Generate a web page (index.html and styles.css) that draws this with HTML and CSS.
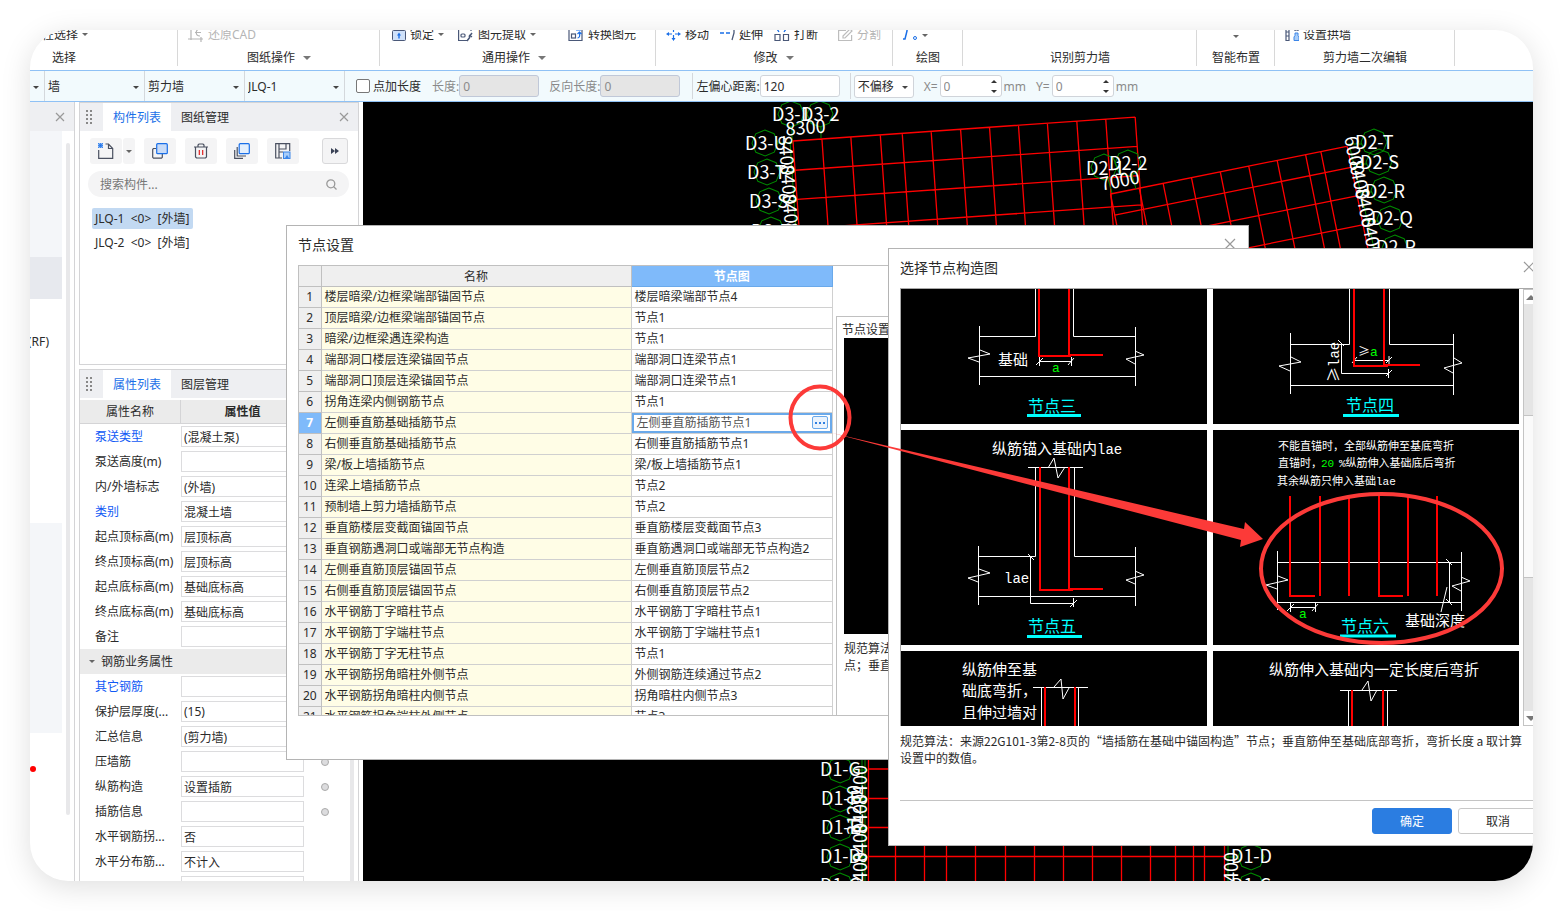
FILE: index.html
```html
<!DOCTYPE html>
<html lang="zh-CN">
<head>
    <meta charset="UTF-8">
    <meta name="viewport" content="width=device-width, initial-scale=1.0">
    <title>节点设置</title>
    <link rel="stylesheet" href="styles.css">
</head>
<body>

<div class="app">
    <header class="ribbon">
        <div class="group group-select">
            <div class="tools"><button class="tool">按属性选择<i class="caret"></i></button></div>
            <div class="group-name">选择</div>
        </div>
        <div class="group group-sheet">
            <div class="tools">
                <button class="tool" disabled>
                    <svg width="16" height="16" viewBox="0 0 16 16"><path d="M3 0v13M0 12h15M13 10v5M12 2c-5 0-5 7 0 7M7 5.500h6" fill="none" stroke="#b5b5b5" stroke-width="1.200"/></svg>还原CAD
                </button>
            </div>
            <div class="group-name">图纸操作<i class="caret big"></i></div>
        </div>
        <div class="group group-common">
            <div class="tools">
                <button class="tool">
                    <svg width="14" height="16" viewBox="0 0 14 16"><rect x=".5" y="3.500" width="13" height="10" rx="1" fill="#cfe1fa" stroke="#4a5878"/><path d="M3 3V0h8v3" fill="none" stroke="#4a5878"/><path d="M7 5.500l2 3H7.700v3H6.300v-3H5z" fill="#1a6fe8"/></svg>锁定<i class="caret"></i>
                </button>
                <button class="tool">
                    <svg width="16" height="16" viewBox="0 0 16 16"><path d="M3 1H.600v12.500H9M13 1v3" fill="none" stroke="#4a5878" stroke-width="1.200"/><rect x="3" y="7" width="4" height="3" rx="1" fill="none" stroke="#4a5878" stroke-width="1.200"/><path d="M9 14l3-4M11 8l3 2M14 6l-3 4" fill="none" stroke="#4a5878" stroke-width="1.500"/></svg>图元提取<i class="caret"></i>
                </button>
                <button class="tool">
                    <svg width="16" height="16" viewBox="0 0 16 16"><path d="M1 2v11.500h13V2" fill="none" stroke="#4a5878" stroke-width="1.200"/><rect x="3.500" y="7" width="4" height="4" fill="none" stroke="#4a5878" stroke-width="1.200"/><path d="M8 3h5M9.500 11c2 0 2.500-2 2-5M9.500 7l2-2 2 2" fill="none" stroke="#1a6fe8" stroke-width="1.200"/></svg>转换图元
                </button>
            </div>
            <div class="group-name">通用操作<i class="caret big"></i></div>
        </div>
        <div class="group group-modify">
            <div class="tools">
                <button class="tool">
                    <svg width="15" height="16" viewBox="0 0 15 16"><path d="M0 7l3-2v4zM15 7l-3-2v4zM7.500 14l-2-3h4zM7.500 0l-2 3h4z" fill="#1a6fe8"/><path d="M3 7h3M9 7h3M7.500 8v4M7.500 3v2" stroke="#1a6fe8" stroke-width="1.200"/></svg>移动
                </button>
                <button class="tool">
                    <svg width="15" height="16" viewBox="0 0 15 16"><path d="M0 6h4M6 6h4" stroke="#1a6fe8" stroke-width="1.400"/><path d="M14 1v5l-2 7" fill="none" stroke="#4a5878" stroke-width="1.300"/></svg>延伸
                </button>
                <button class="tool">
                    <svg width="16" height="16" viewBox="0 0 16 16"><path d="M1 7.500h5v6H1zM9.500 7.500h5v6h-5z" fill="none" stroke="#4a5878" stroke-width="1.200"/><path d="M3 2l2 3M12 2l-2 3" stroke="#1a6fe8" stroke-width="1.300"/></svg>打断
                </button>
                <button class="tool" disabled>
                    <svg width="15" height="16" viewBox="0 0 15 16"><path d="M8 3.500H.600v10h13V8M5 9l7-7 2 2-7 7H5z" fill="none" stroke="#bdbdbd" stroke-width="1.200"/></svg>分割
                </button>
            </div>
            <div class="group-name">修改<i class="caret big"></i></div>
        </div>
        <div class="group group-draw">
            <div class="tools">
                <button class="tool" aria-label="点线绘图">
                    <svg width="15" height="16" viewBox="0 0 15 16"><path d="M0 12h2L4 4V1" fill="none" stroke="#1a6fe8" stroke-width="1.500"/><circle cx="12" cy="11" r="1.500" fill="none" stroke="#1a6fe8"/></svg><i class="caret"></i>
                </button>
            </div>
            <div class="group-name">绘图</div>
        </div>
        <div class="group group-identify">
            <div class="group-name">识别剪力墙</div>
        </div>
        <div class="group group-smart">
            <div class="tools"><button class="tool" aria-label="智能布置"><i class="caret"></i></button></div>
            <div class="group-name">智能布置</div>
        </div>
        <div class="group group-edit">
            <div class="tools">
                <button class="tool">
                    <svg width="14" height="16" viewBox="0 0 14 16"><path d="M1 0v13.500h3V0M1 5h3M1 9h3M10 0v4M13 0v4M10 3h3" fill="none" stroke="#4a5878" stroke-width="1.200"/><path d="M10 6h3v2.500l1 1.500v3.500H9V10l1-1.500z" fill="#a9cdf8" stroke="#3c86e8"/></svg>设置拱墙
                </button>
            </div>
            <div class="group-name">剪力墙二次编辑</div>
        </div>
    </header>

    <div class="options">
        <div class="combo combo-stub"><select aria-label="楼层"><option></option></select></div>
        <div class="combo"><select aria-label="构件大类"><option>墙</option></select></div>
        <div class="combo"><select aria-label="构件类型"><option>剪力墙</option></select></div>
        <div class="combo"><select aria-label="构件名称"><option>JLQ-1</option></select></div>
        <label class="check"><input type="checkbox">点加长度</label>
        <label class="field off">长度:<input type="text" value="0" disabled></label>
        <label class="field off">反向长度:<input type="text" value="0" disabled></label>
        <label class="field ruled">左偏心距离:<input type="text" value="120"></label>
        <div class="offset"><div class="combo boxed"><select aria-label="偏移方式"><option>不偏移</option></select></div></div>
        <label class="field spin">X=<span class="spinner"><input type="text" value="0"></span>mm</label>
        <label class="field spin">Y=<span class="spinner"><input type="text" value="0"></span>mm</label>
    </div>

    <main class="work">
        <aside class="nav">
            <div class="nav-head"><button class="close" aria-label="关闭导航"><svg width="8" height="8" viewBox="0 0 8 8"><path d="M0 0l8 8M8 0L0 8"/></svg></button></div>
            <div class="nav-body">
                <div class="nav-list">
                    <div class="nav-block soft"></div>
                    <div class="nav-block picked"></div>
                    <div class="nav-block items">(RF)</div>
                    <div class="nav-block soft low"></div>
                    <span class="dot"></span>
                </div>
                <div class="nav-scroll"></div>
            </div>
        </aside>

        <div class="panels">
            <section class="panel">
                <div class="tabs">
                    <i class="grip"></i>
                    <button class="tab on">构件列表</button>
                    <button class="tab">图纸管理</button>
                    <button class="close" aria-label="关闭"><svg width="8" height="8" viewBox="0 0 8 8"><path d="M0 0l8 8M8 0L0 8"/></svg></button>
                </div>
                <div class="toolbar">
                    <div class="split">
                        <button class="icon" aria-label="新建"><svg width="16" height="16" viewBox="0 0 16 16"><path d="M.700 7v8.300h14V5.500L10.500 1H7.500M10.500 1v4.500h4.200" fill="none" stroke="#4a5060" stroke-width="1.200"/><path d="M0 0h5v5H0z" fill="#8dbaf5"/><path d="M0 0l5 5M5 0L0 5M2.500 0v5M0 2.500h5" stroke="#1a6fe8" stroke-width=".7"/></svg></button>
                        <button class="icon drop" aria-label="新建选项"><i class="caret"></i></button>
                    </div>
                    <button class="icon" aria-label="复制"><svg width="16" height="16" viewBox="0 0 16 16"><path d="M4 5.500H1.500l-.800.800v8l.800.800h8l.800-.800V11" fill="none" stroke="#4a5060" stroke-width="1.200"/><rect x="4.700" y=".700" width="10.600" height="10" rx="1" fill="#c8dbf7" stroke="#1a6fe8" stroke-width="1.200"/></svg></button>
                    <button class="icon" aria-label="删除"><svg width="16" height="16" viewBox="0 0 16 16"><path d="M1 4h14M2.500 4v10l1 1h9l1-1V4M5 4V2l1-1h4l1 1v2" fill="none" stroke="#4a5060" stroke-width="1.200"/><path d="M6.300 7v5M9.700 7v5" stroke="#e02020" stroke-width="1.200"/></svg></button>
                    <button class="icon" aria-label="层间复制"><svg width="16" height="16" viewBox="0 0 16 16"><path d="M3.200 4v9H12M.700 7v8.300H9" fill="none" stroke="#4a5060" stroke-width="1.200"/><rect x="5.200" y=".700" width="10.100" height="10" rx="1" fill="#e3effd" stroke="#1a6fe8" stroke-width="1.200"/></svg></button>
                    <button class="icon" aria-label="存档"><svg width="16" height="16" viewBox="0 0 16 16"><path d="M7 15H.700V.700h14V8M4 1v14M4 6h7V1M4 9h4" fill="none" stroke="#4a5060" stroke-width="1.200"/><rect x="8.500" y="9" width="6.500" height="6.500" fill="#a9cdf8" stroke="#3c86e8"/><path d="M10 15l2-3 2 3z" fill="#3c86e8"/></svg></button>
                    <button class="icon more" aria-label="更多"><svg width="8" height="6" viewBox="0 0 8 6"><path d="M0 0l4 3-4 3zM4 0l4 3-4 3z" fill="#3a4256"/></svg></button>
                </div>
                <div class="search">
                    <input type="text" placeholder="搜索构件..." aria-label="搜索构件">
                    <svg width="11" height="11" viewBox="0 0 11 11"><circle cx="4.800" cy="4.800" r="4" fill="none" stroke="#9a9a9a" stroke-width="1.300"/><path d="M7.500 7.500l3 3" stroke="#9a9a9a" stroke-width="1.300"/></svg>
                </div>
                <ul class="members">
                    <li><a href="#" class="on">JLQ-1  &lt;0&gt;  [外墙]</a></li>
                    <li><a href="#">JLQ-2  &lt;0&gt;  [外墙]</a></li>
                </ul>
            </section>

            <section class="panel props">
                <div class="tabs">
                    <i class="grip"></i>
                    <button class="tab on">属性列表</button>
                    <button class="tab">图层管理</button>
                </div>
                <div class="prop-head"><span>属性名称</span><b>属性值</b></div>
                <div class="prop-body">
                    <div class="prop-list">
                        <label class="prop key"><span>泵送类型</span><input type="text" value="(混凝土泵)"></label>
                        <label class="prop"><span>泵送高度(m)</span><input type="text"></label>
                        <label class="prop"><span>内/外墙标志</span><input type="text" value="(外墙)"></label>
                        <label class="prop key"><span>类别</span><input type="text" value="混凝土墙"></label>
                        <label class="prop"><span>起点顶标高(m)</span><input type="text" value="层顶标高"></label>
                        <label class="prop"><span>终点顶标高(m)</span><input type="text" value="层顶标高"></label>
                        <label class="prop"><span>起点底标高(m)</span><input type="text" value="基础底标高"></label>
                        <label class="prop"><span>终点底标高(m)</span><input type="text" value="基础底标高"></label>
                        <label class="prop"><span>备注</span><input type="text"></label>
                        <div class="prop-group"><i class="caret"></i>钢筋业务属性</div>
                        <label class="prop key"><span>其它钢筋</span><input type="text"></label>
                        <label class="prop"><span>保护层厚度(...</span><input type="text" value="(15)"></label>
                        <label class="prop"><span>汇总信息</span><input type="text" value="(剪力墙)"></label>
                        <label class="prop"><span>压墙筋</span><input type="text"><i class="mark"></i></label>
                        <label class="prop"><span>纵筋构造</span><input type="text" value="设置插筋"><i class="mark"></i></label>
                        <label class="prop"><span>插筋信息</span><input type="text"><i class="mark"></i></label>
                        <label class="prop"><span>水平钢筋拐...</span><input type="text" value="否"></label>
                        <label class="prop"><span>水平分布筋...</span><input type="text" value="不计入"></label>
                        <label class="prop"><span></span><input type="text" aria-label="属性值"></label>
                    </div>
                    <div class="prop-scroll"></div>
                </div>
            </section>
        </div>

        <div class="canvas">
            <svg class="plan" viewBox="363 102 1170 779" preserveAspectRatio="xMinYMin slice">
                <defs>
                    <polygon id="bubble" points="-5,-12 5,-12 12,-5 12,5 5,12 -5,12 -12,5 -12,-5" transform="rotate(22)"/>
                </defs>
                <g class="red">
                    <path transform="translate(793 141) rotate(-4)" d="M0 0V120M29 0V120M58 0V120M87.500 0V120M109.500 0V120M138.500 0V120M168 0V120M197 0V120M226 0V120M255 0V120M284.500 0V120M313.500 0V120M343 0V120M0 0H343M0 29.300H343M0 58.600H343M0 88H343M0 117H343"/>
                    <path transform="translate(1110.500 194) rotate(-11.400)" d="M0 0V110M29.300 0V110M53.700 0V110M82.600 0V110M112 0V110M141 0V110M170 0V110M199 0V110M214.600 0V110M241.500 0V110M0 0H241M0 21.500H241M0 50.500H241M0 80H241M0 109H241"/>
                    <path d="M868.500 740V881M895.500 740V881M924.500 740V881M946.500 740V881M975.500 740V881M1005.500 740V881M1034.500 740V881M1063.500 740V881M1092.500 740V881M1121.500 740V881M1150.500 740V881M1175.500 740V881M1193.500 740V881M1204.500 740V881M1224.500 740V881M868 769H1224M868 798.500H1224M868 827.500H1224M868 856.500H1224"/>
                </g>
                <g class="green">
                    <use href="#bubble" transform="translate(791 114)"/>
                    <use href="#bubble" transform="translate(820 114)"/>
                    <use href="#bubble" transform="translate(765 143)"/>
                    <use href="#bubble" transform="translate(767 172)"/>
                    <use href="#bubble" transform="translate(769 201)"/>
                    <use href="#bubble" transform="translate(771 230)"/>
                    <use href="#bubble" transform="translate(1104 167)"/>
                    <use href="#bubble" transform="translate(1128 163)"/>
                    <use href="#bubble" transform="translate(1374 142)"/>
                    <use href="#bubble" transform="translate(1379 162)"/>
                    <use href="#bubble" transform="translate(1384 190)"/>
                    <use href="#bubble" transform="translate(1390 219)"/>
                    <use href="#bubble" transform="translate(1395 248)"/>
                    <use href="#bubble" transform="translate(840 770)"/>
                    <use href="#bubble" transform="translate(840 799)"/>
                    <use href="#bubble" transform="translate(840 828)"/>
                    <use href="#bubble" transform="translate(840 857)"/>
                    <use href="#bubble" transform="translate(840 886)"/>
                    <use href="#bubble" transform="translate(1251 857)"/>
                    <use href="#bubble" transform="translate(1251 886)"/>
                    <path d="M792 126v15M821 126v12M777 143h16M779 172h16M781 201h16M790 141l6 90M1108 179l4 14M1132 175l4 14M1350 148l24 100M1362 144h-14M1367 164h-14M1372 192h-12M1378 221h-12M852 770h16M852 799h16M852 828h16M852 857h16M862 740v141M865 740v141M1224 857h15M1228 845v36"/>
                </g>
                <g class="mark-text">
                    <text x="772" y="121">D3-1</text>
                    <text x="801" y="121">D3-2</text>
                    <text x="745" y="150">D3-U</text>
                    <text x="747" y="179">D3-T</text>
                    <text x="749" y="208">D3-S</text>
                    <text x="751" y="238">D3-R</text>
                    <text x="1086" y="175">D2-1</text>
                    <text x="1109" y="170">D2-2</text>
                    <text x="1355" y="149">D2-T</text>
                    <text x="1360" y="169">D2-S</text>
                    <text x="1365" y="198">D2-R</text>
                    <text x="1371" y="225">D2-Q</text>
                    <text x="1376" y="254">D2-P</text>
                    <text x="820" y="776">D1-G</text>
                    <text x="821" y="805">D1-F</text>
                    <text x="821" y="834">D1-E</text>
                    <text x="820" y="863">D1-D</text>
                    <text x="820" y="892">D1-C</text>
                    <text x="1231" y="863">D1-D</text>
                    <text x="1231" y="892">D1-C</text>
                </g>
                <g class="mark-text middle">
                    <text transform="translate(806 134) rotate(-4)">8300</text>
                    <text transform="translate(780 156) rotate(86)">8400</text>
                    <text transform="translate(782 185) rotate(86)">8400</text>
                    <text transform="translate(784 214) rotate(86)">8400</text>
                    <text transform="translate(786 243) rotate(86)">8400</text>
                    <text transform="translate(1121 187) rotate(-11)">7000</text>
                    <text transform="translate(1348 157) rotate(79)">6000</text>
                    <text transform="translate(1353 181) rotate(79)">8400</text>
                    <text transform="translate(1359 209) rotate(79)">8400</text>
                    <text transform="translate(1365 238) rotate(79)">8400</text>
                    <text transform="translate(867 785) rotate(-90)">8400</text>
                    <text transform="translate(867 814) rotate(-90)">8400</text>
                    <text transform="translate(867 843) rotate(-90)">8400</text>
                    <text transform="translate(867 872) rotate(-90)">8400</text>
                    <text transform="translate(861 810) rotate(-90)">31200</text>
                    <text transform="translate(1238 872) rotate(-90)">8400</text>
                </g>
            </svg>
        </div>
    </main>

    <div class="dialog dialog-nodes" role="dialog" aria-label="节点设置">
        <div class="dialog-head">
            <h2>节点设置</h2>
            <button class="close" aria-label="关闭"><svg width="10" height="10" viewBox="0 0 10 10"><path d="M0 0l10 10M10 0L0 10"/></svg></button>
        </div>
        <div class="nodes">
            <div class="table-wrap">
                <table>
                    <thead>
                        <tr><th class="num"></th><th class="name">名称</th><th class="pic">节点图</th></tr>
                    </thead>
                    <tbody>
                        <tr><th>1</th><td>楼层暗梁/边框梁端部锚固节点</td><td>楼层暗梁端部节点4</td></tr>
                        <tr><th>2</th><td>顶层暗梁/边框梁端部锚固节点</td><td>节点1</td></tr>
                        <tr><th>3</th><td>暗梁/边框梁遇连梁构造</td><td>节点1</td></tr>
                        <tr><th>4</th><td>端部洞口楼层连梁锚固节点</td><td>端部洞口连梁节点1</td></tr>
                        <tr><th>5</th><td>端部洞口顶层连梁锚固节点</td><td>端部洞口连梁节点1</td></tr>
                        <tr><th>6</th><td>拐角连梁内侧钢筋节点</td><td>节点1</td></tr>
                        <tr class="current"><th>7</th><td>左侧垂直筋基础插筋节点</td><td><div class="edit">左侧垂直筋插筋节点1<button aria-label="选择节点图"><i></i><i></i><i></i></button></div></td></tr>
                        <tr><th>8</th><td>右侧垂直筋基础插筋节点</td><td>右侧垂直筋插筋节点1</td></tr>
                        <tr><th>9</th><td>梁/板上墙插筋节点</td><td>梁/板上墙插筋节点1</td></tr>
                        <tr><th>10</th><td>连梁上墙插筋节点</td><td>节点2</td></tr>
                        <tr><th>11</th><td>预制墙上剪力墙插筋节点</td><td>节点2</td></tr>
                        <tr><th>12</th><td>垂直筋楼层变截面锚固节点</td><td>垂直筋楼层变截面节点3</td></tr>
                        <tr><th>13</th><td>垂直钢筋遇洞口或端部无节点构造</td><td>垂直筋遇洞口或端部无节点构造2</td></tr>
                        <tr><th>14</th><td>左侧垂直筋顶层锚固节点</td><td>左侧垂直筋顶层节点2</td></tr>
                        <tr><th>15</th><td>右侧垂直筋顶层锚固节点</td><td>右侧垂直筋顶层节点2</td></tr>
                        <tr><th>16</th><td>水平钢筋丁字暗柱节点</td><td>水平钢筋丁字暗柱节点1</td></tr>
                        <tr><th>17</th><td>水平钢筋丁字端柱节点</td><td>水平钢筋丁字端柱节点1</td></tr>
                        <tr><th>18</th><td>水平钢筋丁字无柱节点</td><td>节点1</td></tr>
                        <tr><th>19</th><td>水平钢筋拐角暗柱外侧节点</td><td>外侧钢筋连续通过节点2</td></tr>
                        <tr><th>20</th><td>水平钢筋拐角暗柱内侧节点</td><td>拐角暗柱内侧节点3</td></tr>
                        <tr><th>21</th><td>水平钢筋拐角端柱外侧节点</td><td>节点3</td></tr>
                    </tbody>
                </table>
            </div>
            <div class="preview">
                <h3>节点设置</h3>
                <div class="preview-pic"></div>
                <p>规范算法：来源22G101-3第2-8页的“墙插筋在基础中锚固构造”节<br>点；垂直筋伸至基础底部弯折</p>
            </div>
        </div>
    </div>

    <div class="dialog dialog-pick" role="dialog" aria-label="选择节点构造图">
        <div class="dialog-head">
            <h2>选择节点构造图</h2>
            <button class="close" aria-label="关闭"><svg width="10" height="10" viewBox="0 0 10 10"><path d="M0 0l10 10M10 0L0 10"/></svg></button>
        </div>
        <div class="gallery">
            <div class="tiles">
                <svg class="tile" viewBox="901 209 306 215">
                    <path class="w" d="M1035.500 209V336.500H979M1073.500 209V336.500H1135M979 376.500H1135M979.500 326V385M1135.500 327V386M980 350l10 4-22 4 11 4M1135 351l9 4-18 4 9 5M1039 361.500h32M1039.500 357v9M1071.500 357v9M1036 365l7-7M1068 365l6-7"/>
                    <path class="r" d="M1039 209V356H1071M1069 209V355H1103"/>
                    <text x="998" y="365">基础</text>
                    <text class="g" x="1052" y="372">a</text>
                    <text class="c" x="1028" y="412">节点三</text>
                    <path class="u" d="M1027 415.500h54"/>
                </svg>
                <svg class="tile" viewBox="1213 209 306 215">
                    <path class="w" d="M1349.500 209V344.500H1290M1389.500 209V344.500H1453M1290 385.500H1453M1290.500 333V394M1453.500 334V395M1291 357l10 5-22 4 11 5M1454 358l8 5-18 5 9 5M1354 360.500h35M1389 356v9M1352 363l5-6M1386 363l6-6M1341.500 344V373.500H1389M1388.500 369v9M1386 376l6-6M1338 340l6 6"/>
                    <path class="r" d="M1354 209V366H1388M1384 209V365H1420"/>
                    <text class="t12" x="1358" y="356">≥<tspan class="g">a</tspan></text>
                    <text transform="translate(1339 382) rotate(-90)">≥<tspan class="m">lae</tspan></text>
                    <text class="c" x="1346" y="411">节点四</text>
                    <path class="u" d="M1343 415.500h56"/>
                </svg>
                <svg class="tile" viewBox="901 430 306 215">
                    <path class="w" d="M1028 467.500H1083M1035.500 467V556.500H979M1074.500 467V556.500H1135M979 596.500H1135M978.500 546V605M1135.500 547V606M979 569l11 4-22 5 10 4M1135 571l9 4-18 5 9 4M1030.500 556V603.500H1073M1073.500 598v9M1070 607l7-7M1028 554l6 6M1048 468l6-10 4 20 7-11"/>
                    <path class="r" d="M1040 467V590H1073M1069 467V589H1103"/>
                    <text x="992" y="454">纵筋锚入基础内<tspan class="m">lae</tspan></text>
                    <text class="m" x="1004" y="583">lae</text>
                    <text class="c" x="1028" y="632">节点五</text>
                    <path class="u" d="M1027 636.500h55"/>
                </svg>
                <svg class="tile" viewBox="1213 430 306 215">
                    <path class="w" d="M1277.500 551V610M1461.500 552V611M1277 562.500H1461M1277 602.500H1461M1449.500 562V602M1446 559l6 6M1446 599l6 6M1447 587l-6 25M1278 576l10 4-22 5 11 4M1461 577l9 4-18 5 9 5M1290 607.500h26M1290.500 603v9M1315.500 603v9M1287 611l7-7M1312 611l6-7"/>
                    <path class="r" d="M1290 496V596H1315M1320 496V596M1349 496V596M1379 496V596H1403M1408 496V596M1437 496V596"/>
                    <text class="t11" x="1278" y="450">不能直锚时，全部纵筋伸至基底弯折</text>
                    <text class="t11" x="1278" y="467">直锚时，<tspan class="g" x="1321">20</tspan><tspan class="ms" x="1339">%</tspan>纵筋伸入基础底后弯折</text>
                    <text class="t11" x="1277" y="485">其余纵筋只伸入基础<tspan class="ms">lae</tspan></text>
                    <text class="g" x="1299" y="618">a</text>
                    <text class="c" x="1341" y="632">节点六</text>
                    <text x="1405" y="626">基础深度</text>
                    <path class="u" d="M1340 636h56"/>
                </svg>
                <svg class="tile" viewBox="901 651 306 215">
                    <path class="w" d="M1033 687.500H1088M1041.500 687V866M1078.500 687V866M1054 687l7-8 2 20 6-11"/>
                    <path class="r" d="M1045 687V866M1075 687V866"/>
                    <text x="962" y="675">纵筋伸至基</text>
                    <text x="962" y="696">础底弯折，</text>
                    <text x="962" y="718">且伸过墙对</text>
                </svg>
                <svg class="tile" viewBox="1213 651 306 215">
                    <path class="w" d="M1340 690.500H1397M1348.500 690V866M1387.500 690V866M1362 690l6-9 3 20 6-11"/>
                    <path class="r" d="M1352 690V866M1383 690V866"/>
                    <text x="1269" y="675">纵筋伸入基础内一定长度后弯折</text>
                </svg>
            </div>
            <div class="scrollbar">
                <button aria-label="向上"><i class="caret up"></i></button>
                <div class="thumb"></div>
                <button aria-label="向下"><i class="caret"></i></button>
            </div>
        </div>
        <p class="rule">规范算法：来源22G101-3第2-8页的“墙插筋在基础中锚固构造”节点；垂直筋伸至基础底部弯折，弯折长度 a 取计算设置中的数值。</p>
        <div class="actions">
            <button class="btn primary">确定</button>
            <button class="btn">取消</button>
        </div>
    </div>

    <svg class="notes" viewBox="30 30 1503 851" preserveAspectRatio="xMinYMin slice">
        <ellipse cx="820" cy="417.500" rx="29.500" ry="31"/>
        <ellipse cx="1381.500" cy="568.500" rx="120.500" ry="74.500"/>
        <path d="M832 433L1244 529l1-7 18 17-23 8 1-7z"/>
    </svg>
</div>

</body>
</html>
```
FILE: styles.css
```css
* {
    box-sizing: border-box;
}
body {
    margin: 0;
    height: 100vh;
    padding: 30px;
    background-color: #fff;
    color: #2b2b2b;
    font-family: "Noto Sans", "Noto Sans CJK SC", sans-serif;
    font-size: 12px;
    line-height: 17px;
}
button, input, select {
    font: inherit;
    color: inherit;
}
button {
    background: none;
    border: none;
    padding: 0;
}
h2, h3, p, ul {
    margin: 0;
    padding: 0;
    font-weight: normal;
}
.app {
    position: relative;
    display: flex;
    flex-direction: column;
    height: 100%;
    overflow: hidden;
    border-radius: 38px;
    background-color: #fff;
    box-shadow: 0 6px 30px rgba(0, 0, 0, 0.13);
}
.caret {
    display: inline-block;
    flex: none;
    border: 3px solid transparent;
    border-top-color: #666;
    border-bottom: none;
}
.caret.big {
    border-width: 4px;
    border-bottom: none;
    border-top-color: #777;
}
.close {
    display: flex;
}
.close svg {
    overflow: visible;
    stroke: #999;
    stroke-width: 1.2;
}

/* ribbon */
.ribbon {
    display: flex;
    flex: none;
    height: 40px;
    overflow: hidden;
}
.group {
    position: relative;
    display: flex;
    flex-direction: column;
    flex: none;
    justify-content: flex-end;
    gap: 6px;
    padding: 0 10px 4px;
}
.group::after {
    content: "";
    position: absolute;
    top: 0;
    right: 0;
    height: 36px;
    border-right: 1px solid #d8d8d8;
}
.tools {
    display: flex;
    height: 20px;
}
.tool {
    display: flex;
    align-items: center;
    gap: 4px;
    white-space: nowrap;
}
.tool:disabled {
    color: #b5b5b5;
}
.group-name {
    display: flex;
    align-items: center;
    justify-content: center;
    gap: 8px;
}
.group-select {
    width: 148px;
    padding-right: 90px;
}
.group-select .tools {
    justify-content: flex-end;
}
.group-sheet { width: 202px; }
.group-common {
    width: 276px;
    padding-left: 12px;
    padding-right: 20px;
}
.group-modify {
    width: 237px;
    padding-right: 12px;
}
.group-common .tools {
    gap: 14px;
}
.group-modify .tools {
    gap: 11px;
}
.group-common .tool:last-child, .group-modify .tool:last-child {
    margin-left: auto;
}
.group-draw { width: 70px; }
.group-identify { width: 234px; }
.group-smart { width: 78px; }
.group-smart .tools { justify-content: center; }
.group-edit { width: 180px; }

/* option bar */
.options {
    display: flex;
    flex: none;
    align-items: center;
    height: 32px;
    border-top: 1px solid #8fc1f5;
    border-bottom: 1px solid #8fc1f5;
    background-color: #f2fafd;
}
.combo {
    position: relative;
    width: 100px;
    height: 100%;
    border-right: 1px solid #d4d8dc;
}
.combo::after {
    content: "";
    position: absolute;
    right: 5px;
    top: 50%;
    border: 3px solid transparent;
    border-top-color: #444;
    border-bottom: none;
}
.combo select {
    width: 100%;
    height: 100%;
    padding: 0 3px;
    border: none;
    background: none;
    appearance: none;
}
.combo-stub {
    width: 15px;
}
.combo.boxed {
    width: 60px;
    height: 23px;
    border: 1px solid #d0d4da;
    border-radius: 3px;
    background-color: #fff;
}
.check {
    display: flex;
    align-items: center;
    gap: 3px;
    padding: 0 11px;
}
.check input {
    width: 14px;
    height: 14px;
    margin: 0;
    border: 1px solid #777;
    border-radius: 2px;
    background-color: #fff;
    appearance: none;
}
.field {
    display: flex;
    align-items: center;
    margin-right: 10px;
    white-space: nowrap;
}
.field input {
    width: 80px;
    height: 22px;
    padding: 0 3px;
    border: 1px solid #d0d4da;
    border-radius: 3px;
    background-color: #fff;
}
.field.off, .field.spin, .field.spin input {
    color: #8a8a8a;
}
.field.off input {
    border-color: #c0c8d8;
    background-color: #e5e5e5;
}
.ruled {
    height: 26px;
    margin-left: 2px;
    padding-left: 3px;
    border-left: 1px solid #d4d8dc;
}
.offset {
    display: flex;
    align-items: center;
    height: 26px;
    margin-right: 10px;
    padding-left: 3px;
    border-left: 1px solid #d4d8dc;
}
.spinner {
    position: relative;
    margin: 0 2px;
}
.spinner input {
    width: 62px;
}
.spinner::before, .spinner::after {
    content: "";
    position: absolute;
    right: 5px;
    border: 3px solid transparent;
}
.spinner::before {
    top: 5px;
    border-top: none;
    border-bottom-color: #333;
}
.spinner::after {
    bottom: 4px;
    border-bottom: none;
    border-top-color: #333;
}

/* work area */
.work {
    display: flex;
    flex: 1;
    min-height: 0;
}
.nav {
    display: flex;
    flex-direction: column;
    width: 45px;
    border-right: 1px solid #d4d4d6;
}
.nav-head {
    display: flex;
    align-items: center;
    justify-content: flex-end;
    height: 29px;
    padding-right: 10px;
    background-color: #eeeff2;
}
.nav-body {
    display: flex;
    flex: 1;
    gap: 4px;
}
.nav-list {
    width: 32px;
}
.nav-block {
    display: flex;
    justify-content: flex-end;
    height: 126px;
}
.nav-block.soft { background-color: #f4f6f9; }
.nav-block.low { height: 210px; }
.nav-block.picked {
    height: 42px;
    background-color: #e7e9ee;
}
.nav-block.items {
    height: 224px;
    padding: 34px 13px 0 0;
}
.dot {
    display: block;
    width: 6px;
    height: 6px;
    margin-top: 33px;
    border-radius: 3px;
    background-color: #f00;
}
.nav-scroll {
    width: 4px;
    height: 672px;
    margin-top: 12px;
    border-radius: 2px;
    background-color: #e8e8ea;
}
.panels {
    display: flex;
    flex-direction: column;
    gap: 4px;
    width: 288px;
    padding: 0 4px;
}
.panel {
    flex: none;
    height: 263px;
    border: 1px solid #d4d4d6;
}
.panel.props {
    display: flex;
    flex-direction: column;
    flex: 1;
    min-height: 0;
    border-bottom: none;
}
.tabs {
    display: flex;
    flex: none;
    height: 28px;
    background-color: #eeeff2;
}
.tabs .close {
    align-items: center;
    margin-left: auto;
    padding-right: 10px;
}
.tab {
    padding: 0 10px;
}
.tab.on {
    background-color: #fff;
    color: #1a6fe8;
}
.grip {
    width: 23px;
    padding: 7px 0 6px;
    background-image: linear-gradient(#888 2px, transparent 2px), linear-gradient(#888 2px, transparent 2px);
    background-size: 2px 4px;
    background-repeat: repeat-y;
    background-position: 6px 7px, 10px 7px;
    background-clip: content-box;
}
.toolbar {
    display: flex;
    gap: 9px;
    padding: 7px 10px;
}
.split {
    display: flex;
    gap: 1px;
}
.icon {
    display: flex;
    align-items: center;
    justify-content: center;
    width: 32px;
    height: 26px;
    border-radius: 3px;
    background-color: #f4f4f5;
}
.icon.drop {
    width: 12px;
}
.icon.more {
    width: 26px;
    margin-left: auto;
    border: 1px solid #d9d9db;
}
.search {
    display: flex;
    align-items: center;
    height: 26px;
    margin: 0 9px 0 8px;
    padding: 0 12px;
    border-radius: 13px;
    background-color: #f4f4f5;
}
.search input {
    flex: 1;
    min-width: 0;
    padding: 0;
    border: none;
    background: none;
}
.search input::placeholder {
    color: #777;
}
.members {
    padding: 11px 12px;
    list-style: none;
}
.members li {
    height: 24px;
}
.members a {
    display: inline-block;
    padding: 2px 4px 2px 3px;
    border-radius: 2px;
    color: inherit;
    text-decoration: none;
    white-space: pre;
}
.members .on {
    background-color: #c2d9f2;
}
.prop-head {
    display: flex;
    flex: none;
    height: 26px;
    border-top: 2px solid #fff;
    border-bottom: 1px solid #d4d4d6;
    background-color: #ebebeb;
    line-height: 24px;
    text-align: center;
}
.prop-head span {
    width: 101px;
    border-right: 1px solid #d4d4d6;
}
.prop-head b {
    width: 123px;
    font-weight: bold;
}
.prop-body {
    display: flex;
    flex: 1;
    justify-content: space-between;
    min-height: 0;
    overflow: hidden;
}
.prop-list {
    flex: 1;
}
.prop {
    display: flex;
    align-items: center;
    height: 25px;
    padding-left: 15px;
}
.prop span {
    width: 86px;
    white-space: nowrap;
}
.prop input {
    width: 123px;
    height: 21px;
    padding: 0 2px;
    border: 1px solid #dcdcde;
    background-color: #fff;
}
.prop.key span {
    color: #1059f5;
}
.mark {
    width: 8px;
    height: 8px;
    margin-left: 17px;
    border: 1px solid #aaa;
    border-radius: 4px;
    background-color: #dcdcde;
}
.prop-group {
    display: flex;
    align-items: center;
    gap: 6px;
    height: 25px;
    padding-left: 9px;
    background-color: #ebebeb;
}
.prop-scroll {
    width: 4px;
    margin-right: 4px;
    background-color: #e8e8ea;
}
.canvas {
    flex: 1;
    min-width: 0;
    overflow: hidden;
    background-color: #000;
}
.plan {
    display: block;
    width: 100%;
    height: 100%;
    fill: none;
}
.red { stroke: #f00; stroke-width: 1.3; }
.green { stroke: #008a00; }
.mark-text {
    fill: #fff;
    font-family: "Noto Sans CJK SC", sans-serif;
    font-size: 18px;
}
.middle {
    text-anchor: middle;
}

/* dialogs */
.dialog {
    position: absolute;
    display: flex;
    flex-direction: column;
    border: 1px solid #b4b4b4;
    background-color: #fff;
}
.dialog-head {
    display: flex;
    flex: none;
    align-items: center;
    justify-content: space-between;
    height: 39px;
    padding: 0 13px 3px 11px;
}
.dialog-head h2 {
    font-size: 14px;
}
.dialog-nodes {
    left: 256px;
    top: 195px;
    width: 963px;
    height: 535px;
}
.nodes {
    display: flex;
    gap: 3px;
    height: 451px;
    margin: 0 11px;
    border: 1px solid #c0c0c0;
    border-right: none;
}
.table-wrap {
    width: 534px;
    overflow: hidden;
}
table {
    width: 100%;
    border-collapse: collapse;
    table-layout: fixed;
}
th, td {
    height: 21px;
    padding: 0 3px 1px;
    border: 1px solid #d0d0d0;
    text-align: left;
}
th {
    padding: 0;
    border-color: #c0c0c0;
    background-color: #efefef;
    font-weight: normal;
    text-align: center;
}
tr > :first-child { border-left: none; }
thead th {
    height: 20px;
    padding-top: 1px;
    border-top: none;
}
.num { width: 22px; }
.name { width: 310px; }
thead .pic {
    border-color: #6aa9ea;
    background-color: #7fbafa;
    color: #fff;
    font-weight: bold;
}
td:nth-child(2) {
    background-color: #fffde6;
}
.current th {
    background-color: #7fbafa;
    color: #fff;
    font-weight: bold;
}
.current td:last-child {
    padding: 0;
}
.edit {
    display: flex;
    align-items: center;
    justify-content: space-between;
    height: 20px;
    padding: 0 2px 0 3px;
    border: 2px solid #6aa9ea;
    color: #555;
}
.edit button {
    display: flex;
    align-items: center;
    justify-content: center;
    gap: 2px;
    width: 16px;
    height: 13px;
    border: 1px solid #6aa9ea;
    border-radius: 2px;
    background-color: #eaf3fd;
}
.edit i {
    width: 2px;
    height: 2px;
    background-color: #2f7fe0;
}
.preview {
    flex: 1;
    margin-top: 50px;
    padding: 4px 7px;
    border: 1px solid #c0c0c0;
    border-bottom: none;
    white-space: nowrap;
    overflow: hidden;
}
.preview h3 {
    margin-left: -2px;
    font-size: 12px;
}
.preview-pic {
    height: 296px;
    margin-bottom: 6px;
    background-color: #000;
}
.dialog-pick {
    left: 858px;
    top: 218px;
    width: 660px;
    height: 598px;
    padding: 0 9px 11px 11px;
}
.dialog-pick .dialog-head {
    padding: 0 4px 3px 0;
}
.gallery {
    display: flex;
    flex: none;
    justify-content: space-between;
    height: 438px;
    border-top: 1px solid #a8a8a8;
    border-left: 1px solid #a8a8a8;
    overflow: hidden;
}
/* scrolled down, so the first and last rows are cut */
.tiles {
    display: grid;
    grid-template-columns: 306px 306px;
    gap: 6px;
    align-content: end;
    align-self: flex-end;
    height: 577px;
    margin-top: -1px;
    margin-bottom: -140px;
}
.tile {
    width: 306px;
    height: 215px;
    background-color: #000;
    fill: #fff;
    font-family: "Noto Sans CJK SC", sans-serif;
    font-size: 15px;
}
.tile path { fill: none; }
.tile .w { stroke: #fff; }
.tile .r { stroke: #f00; stroke-width: 2; }
.tile .u { stroke: #0ff; stroke-width: 3; }
.tile .c { fill: #0ff; font-size: 16px; }
.tile .g {
    fill: #0f0;
    font-family: "Liberation Mono", monospace;
    font-size: 13px;
}
.tile .m {
    font-family: "Liberation Mono", monospace;
    font-size: 14px;
}
.tile .ms {
    font-family: "Liberation Mono", monospace;
}
.tile .t12 { font-size: 12px; }
.tile .t11, .tile .t11 .g {
    font-size: 11px;
}
.scrollbar {
    display: flex;
    flex-direction: column;
    justify-content: space-between;
    width: 15px;
    border: 1px solid #c4c4c4;
    background-color: #e5e5e5;
}
.scrollbar button {
    display: flex;
    align-items: center;
    justify-content: center;
    width: 13px;
    height: 14px;
    background-color: #fff;
}
.scrollbar .caret {
    border: 5px solid transparent;
    border-top-color: #777;
    border-bottom: none;
}
.scrollbar .up {
    border: 5px solid transparent;
    border-top: none;
    border-bottom-color: #777;
}
.thumb {
    height: 163px;
    margin-bottom: 22px;
    border-top: 1px solid #c4c4c4;
    border-bottom: 1px solid #c4c4c4;
    background-color: #fafafa;
}
.rule {
    flex: 1;
    padding: 6px 14px 0 0;
    font-family: "Noto Sans CJK SC", sans-serif;
}
.actions {
    display: flex;
    flex: none;
    justify-content: flex-end;
    gap: 6px;
    padding-top: 7px;
    border-top: 1px solid #c4c4c4;
}
.btn {
    width: 80px;
    height: 26px;
    border: 1px solid #c8c8c8;
    border-radius: 3px;
}
.btn.primary {
    border-color: #2b7de1;
    background-color: #2b7de1;
    color: #fff;
}

/* marks drawn over the windows */
.notes {
    position: absolute;
    inset: 0;
    width: 100%;
    height: 100%;
    fill: none;
    stroke: #fc3a38;
    stroke-width: 4;
    pointer-events: none;
}
.notes path {
    fill: #fc3a38;
    stroke: none;
}
```
